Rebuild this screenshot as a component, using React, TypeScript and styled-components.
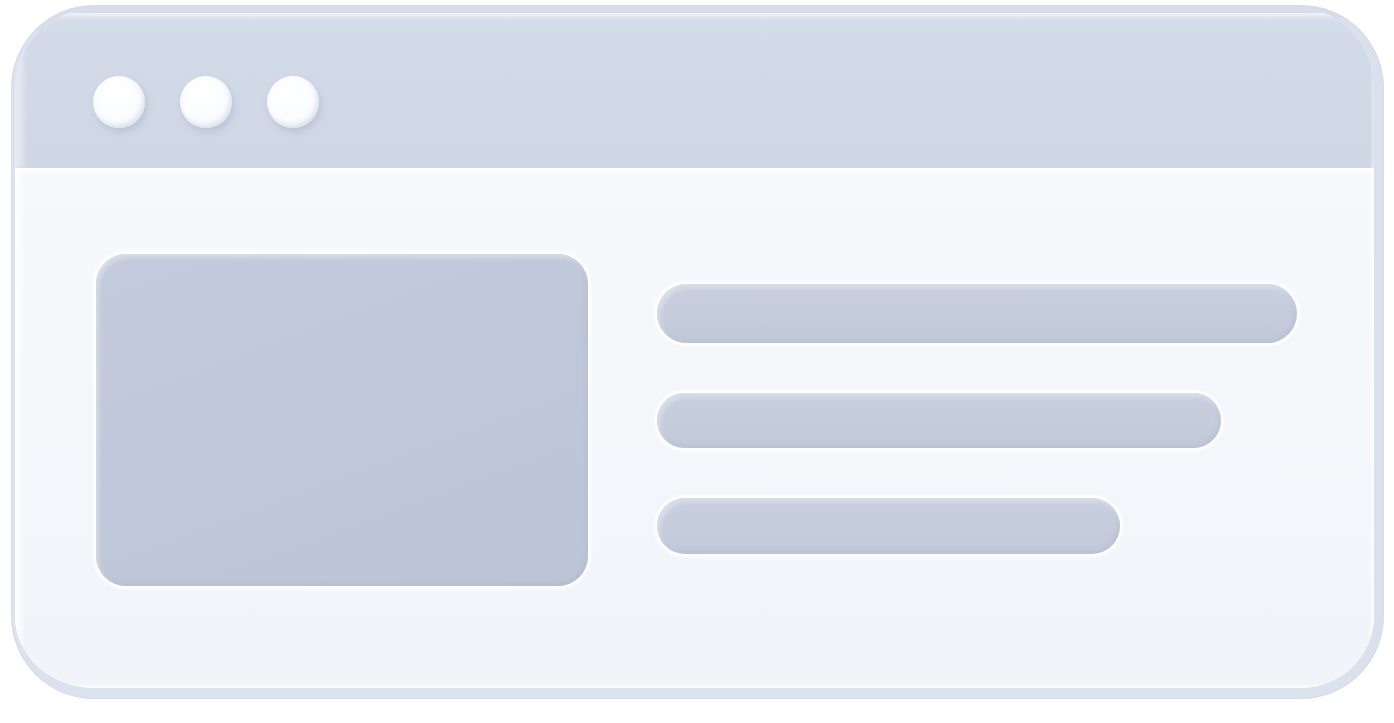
import React from "react";
import styled, { createGlobalStyle } from "styled-components";

const Global = createGlobalStyle`
  html, body { margin: 0; padding: 0; background: #ffffff; }
  body { font-family: "Liberation Sans", Arial, sans-serif; }
`;

const Stage = styled.div`
  width: 1394px;
  height: 723px;
  padding: 6px 11px 25px 12px;
  box-sizing: border-box;
  background: #ffffff;
`;

const Window = styled.div`
  width: 1371px;
  height: 692px;
  box-sizing: border-box;
  border-radius: 82px;
  border-style: solid;
  border-width: 3px 9px 10px 3px;
  border-color: #d6dcea #dbe0ed #dce1ee #dde2ee;
  overflow: hidden;
  display: flex;
  flex-direction: column;
  background: #f4f6fa;
  box-shadow: 0 0 0 1px #d5dbe8;
`;

const TitleBar = styled.div`
  height: 159px;
  flex: none;
  box-sizing: border-box;
  padding: 67px 0 0 78px;
  display: flex;
  gap: 35px;
  align-items: flex-start;
  background: linear-gradient(180deg, #d6ddea 0%, #d2d9e7 30%, #cfd6e4 100%);
  box-shadow:
    inset 0 4px 0 #d6dcea,
    inset 0 8px 5px rgba(255, 255, 255, 0.6),
    inset 3px 0 0 #dfe4ef,
    inset 8px 0 6px rgba(255, 255, 255, 0.45),
    inset -3px 0 0 #d6dcea,
    inset 0 -2px 2px rgba(180, 190, 210, 0.4);
`;

const Dot = styled.div`
  width: 52px;
  height: 52px;
  border-radius: 50%;
  background: radial-gradient(circle at 40% 35%, #ffffff 0%, #fbfcfe 55%, #eef1f7 100%);
  box-shadow:
    2px 4px 6px rgba(150, 162, 188, 0.35),
    inset -2px -3px 4px rgba(200, 208, 224, 0.5);
`;

const Content = styled.div`
  flex: 1;
  display: flex;
  align-items: flex-start;
  padding: 86px 0 0 81px;
  gap: 69px;
  background: linear-gradient(180deg, #f7f8fc 0%, #f2f4f9 100%);
  box-shadow:
    inset 0 4px 3px rgba(255, 255, 255, 0.9),
    inset 6px 0 5px rgba(255, 255, 255, 0.8),
    inset -3px 0 3px rgba(255, 255, 255, 0.8),
    inset 0 -3px 3px rgba(255, 255, 255, 0.6);
`;

const ImageBox = styled.div`
  width: 492px;
  height: 332px;
  flex: none;
  border-radius: 30px;
  background: linear-gradient(160deg, #c2cadb 0%, #bcc5d5 100%);
  box-shadow:
    0 0 3px 3px #ffffff,
    inset 3px 4px 5px rgba(228, 233, 242, 0.6),
    inset -2px -3px 4px rgba(160, 170, 192, 0.25);
`;

const Lines = styled.div`
  display: flex;
  flex-direction: column;
  gap: 50px;
  padding-top: 30px;
`;

const Line = styled.div<{ $w: number; $h: number }>`
  width: ${(p) => p.$w}px;
  height: ${(p) => p.$h}px;
  border-radius: 999px;
  background: linear-gradient(180deg, #c8cfde 0%, #c2cada 100%);
  box-shadow:
    0 0 3px 3px #ffffff,
    inset 3px 4px 5px rgba(228, 233, 242, 0.6),
    inset -2px -3px 4px rgba(160, 170, 192, 0.25);
`;

const lines = [
  { w: 640, h: 59 },
  { w: 564, h: 55 },
  { w: 463, h: 56 },
];

export default function App() {
  return (
    <>
      <Global />
      <Stage>
        <Window>
          <TitleBar>
            <Dot />
            <Dot />
            <Dot />
          </TitleBar>
          <Content>
            <ImageBox />
            <Lines>
              {lines.map((l, i) => (
                <Line key={i} $w={l.w} $h={l.h} />
              ))}
            </Lines>
          </Content>
        </Window>
      </Stage>
    </>
  );
}
